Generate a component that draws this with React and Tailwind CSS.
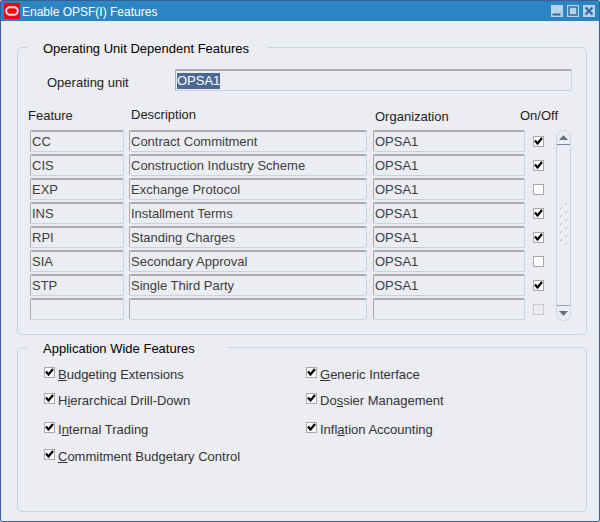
const rows = [
  ["CC", "Contract Commitment", "OPSA1", true],
  ["CIS", "Construction Industry Scheme", "OPSA1", true],
  ["EXP", "Exchange Protocol", "OPSA1", false],
  ["INS", "Installment Terms", "OPSA1", true],
  ["RPI", "Standing Charges", "OPSA1", true],
  ["SIA", "Secondary Approval", "OPSA1", false],
  ["STP", "Single Third Party", "OPSA1", true],
  ["", "", "", null],
];

function Check({ on, dim }) {
  return (
    <span className={`flex h-[11px] w-[11px] shrink-0 items-center justify-center border ${dim ? "border-[#c8c9cd] bg-[#ecedf3]" : "border-[#a8a8a8] bg-white"}`}>
      {on && (
        <svg width="9" height="9" viewBox="0 0 9 9">
          <path d="M1 3.5 L3.5 6.5 L8 1" fill="none" stroke="#000" strokeWidth="2.2" />
        </svg>
      )}
    </span>
  );
}

function Field({ className, children }) {
  return (
    <div className={`flex h-[22px] items-center overflow-hidden whitespace-nowrap rounded-[2px] border border-b-[#c6d3e5] border-l-[#a9adb1] border-r-[#c6d3e5] border-t-2 border-t-[#a9adb1] pl-[1px] text-[#3d3d3d] ${className}`}>
      {children}
    </div>
  );
}

function Opt({ label, u }) {
  return (
    <div className="flex items-start gap-[3px] text-[#333]">
      <Check on />
      <span>
        {label.slice(0, u)}
        <span className="underline">{label[u]}</span>
        {label.slice(u + 1)}
      </span>
    </div>
  );
}

function Group({ title, titleClass, className, children }) {
  return (
    <div className={`relative rounded-[5px] border border-[#c6d3e5] ${className}`}>
      <div className={`absolute top-[-7px] bg-[#ecedf3] text-black ${titleClass}`}>{title}</div>
      {children}
    </div>
  );
}

export default function App() {
  return (
    <div
      className="flex h-[522px] w-[600px] flex-col overflow-hidden rounded-[2px] border border-[#3a5f95] bg-[#ecedf3] text-[13px] leading-[16px] text-[#222]"
      style={{ fontFamily: '"Liberation Sans", Arial, sans-serif' }}
    >
      <div className="flex h-[20px] shrink-0 items-center bg-[#2d84c2] pl-[3px] pr-[4px] text-white">
        <svg width="16" height="16" viewBox="0 0 16 16" className="shrink-0">
          <rect width="16" height="16" fill="#f5000f" />
          <rect x="2.2" y="4.2" width="11.6" height="7.6" rx="3.8" fill="none" stroke="#ffd9d9" strokeWidth="2" />
        </svg>
        <span className="ml-[2px] mt-[1px] text-[12px]">Enable OPSF(I) Features</span>
        <div className="ml-auto flex gap-[4px]">
          <svg width="12" height="12" viewBox="0 0 12 12"><rect width="12" height="12" fill="#b5d3ea" /><rect x="1.5" y="8.5" width="8" height="2" fill="#2d6ea6" /></svg>
          <svg width="12" height="12" viewBox="0 0 12 12"><rect width="12" height="12" fill="#b5d3ea" /><rect x="2" y="2" width="8" height="8" fill="none" stroke="#2d6ea6" strokeWidth="1.5" /></svg>
          <svg width="12" height="12" viewBox="0 0 12 12"><rect width="12" height="12" fill="#b5d3ea" /><path d="M2.5 2.5 L9.5 9.5 M9.5 2.5 L2.5 9.5" stroke="#2d6ea6" strokeWidth="2.2" /></svg>
        </div>
      </div>

      <div className="flex flex-1 flex-col pl-[16px] pr-[12px] pt-[26px]">
        <Group title="Operating Unit Dependent Features" titleClass="left-[9px] pl-[16px] pr-[18px]" className="h-[288px] shrink-0 px-[12px]">
          <div className="flex items-center pt-[21px]">
            <span className="ml-[17px] mt-[5px] w-[128px]">Operating unit</span>
            <div className="flex h-[22px] w-[397px] items-center rounded-[2px] border border-b-[#c6d3e5] border-l-[#a9adb1] border-r-[#c6d3e5] border-t-2 border-t-[#a9adb1] pl-[1px]">
              <span className="bg-[#4a6a94] text-white">OPSA1</span>
            </div>
          </div>
          <div className="mt-[11px] flex h-[24px] items-end pb-[2px]">
            <span className="ml-[-2px] w-[103px]">Feature</span>
            <span className="mb-[1px] w-[244px]">Description</span>
            <span className="mb-[-1px] w-[145px]">Organization</span>
            <span>On/Off</span>
          </div>
          <div className="mt-[4px] flex">
            <div className="flex flex-col gap-[2px]">
              {rows.map((r, i) => (
                <div key={i} className="flex items-center">
                  <Field className="w-[94px]">{r[0]}</Field>
                  <Field className="ml-[5px] w-[238px]">{r[1]}</Field>
                  <Field className="ml-[6px] w-[152px]">{r[2]}</Field>
                  <div className="ml-[8px]">
                    <Check on={r[3] === true} dim={r[3] === null} />
                  </div>
                </div>
              ))}
            </div>
            <div className="relative ml-[12px] flex h-[191px] w-[15px] flex-col items-center justify-between rounded-full border border-[#c6d3e5]">
              <div className="flex h-[14px] w-full items-center justify-center border-b border-[#7d8399]">
                <svg width="9" height="5" viewBox="0 0 9 5"><path d="M4.5 0 L9 5 H0 Z" fill="#6b6f85" /></svg>
              </div>
              <svg width="9" height="44" viewBox="0 0 9 44" className="shrink-0" stroke="#8f9bb8" strokeWidth="1" strokeDasharray="1 1">
                <path d="M1 6 L3 4 M1 14 L3 12 M1 22 L3 20 M1 30 L3 28 M1 38 L3 36 M6 2 L8 0 M6 10 L8 8 M6 18 L8 16 M6 26 L8 24 M6 34 L8 32 M6 42 L8 40" />
              </svg>
              <div className="flex h-[15px] w-full items-center justify-center border-t border-[#9aa1b5]">
                <svg width="9" height="5" viewBox="0 0 9 5"><path d="M0 0 H9 L4.5 5 Z" fill="#6b6f85" /></svg>
              </div>
            </div>
          </div>
        </Group>

        <Group title="Application Wide Features" titleClass="left-[9px] pl-[16px] pr-[33px]" className="mt-[12px] h-[165px] shrink-0">
          <div className="grid grid-cols-[262px_1fr] pl-[26px] pt-[19px]">
            <div className="h-[26px]"><Opt label="Budgeting Extensions" u={0} /></div>
            <div><Opt label="Generic Interface" u={0} /></div>
            <div className="h-[29px]"><Opt label="Hierarchical Drill-Down" u={1} /></div>
            <div><Opt label="Dossier Management" u={2} /></div>
            <div className="h-[27px]"><Opt label="Internal Trading" u={1} /></div>
            <div><Opt label="Inflation Accounting" u={4} /></div>
            <div><Opt label="Commitment Budgetary Control" u={0} /></div>
          </div>
        </Group>
      </div>
    </div>
  );
}
